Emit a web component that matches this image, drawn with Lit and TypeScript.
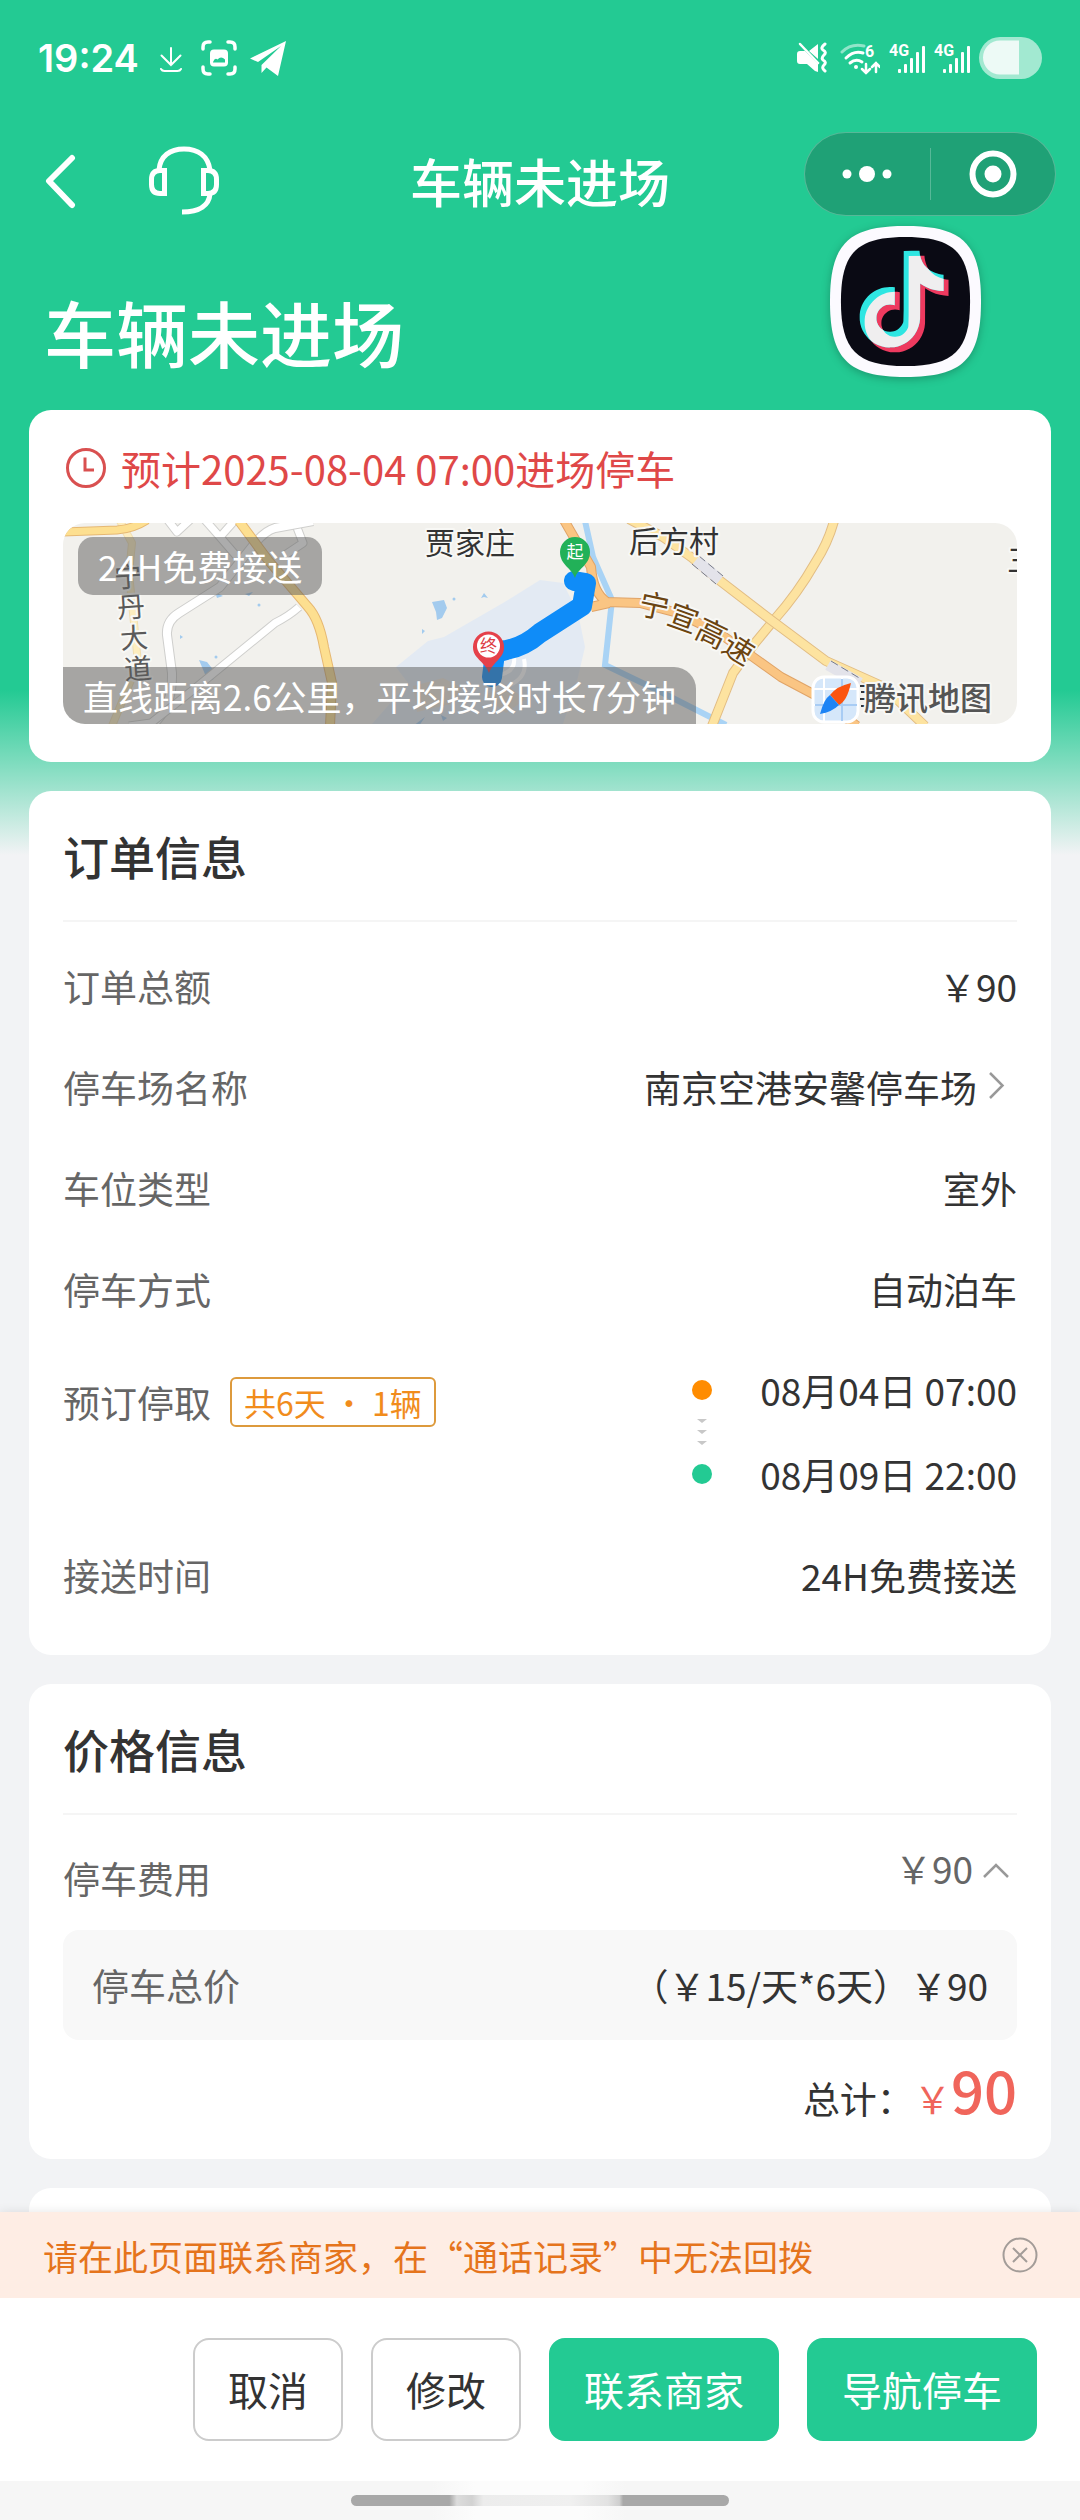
import { LitElement, html, css, svg } from "lit";
import { customElement, property } from "lit/decorators.js";

const NOTE =
  "M12.525.02c1.31-.02 2.61-.01 3.91-.02.08 1.53.63 3.09 1.75 4.17 1.12 1.11 2.7 1.62 4.24 1.79v4.03c-1.44-.05-2.89-.35-4.2-.97-.57-.26-1.1-.59-1.62-.93-.01 2.92.01 5.84-.02 8.75-.08 1.4-.54 2.79-1.35 3.94-1.31 1.92-3.58 3.17-5.91 3.21-1.43.08-2.86-.31-4.08-1.03-2.02-1.19-3.44-3.37-3.65-5.71-.02-.5-.03-1-.01-1.49.18-1.9 1.12-3.72 2.58-4.96 1.66-1.44 3.98-2.13 6.15-1.72.02 1.48-.04 2.96-.04 4.44-.99-.32-2.15-.23-3.02.37-.63.41-1.11 1.04-1.36 1.75-.21.51-.15 1.07-.14 1.61.24 1.64 1.82 3.02 3.5 2.87 1.12-.01 2.19-.66 2.77-1.61.19-.33.4-.67.41-1.06.1-1.79.06-3.57.07-5.36.01-4.03-.01-8.05.02-12.07z";

@customElement("status-bar")
export class StatusBar extends LitElement {
  static styles = css`
    :host {
      display: flex;
      justify-content: space-between;
      align-items: center;
      height: 116px;
      padding: 0 38px;
      color: #fff;
    }
    .group {
      display: flex;
      align-items: center;
      gap: 13px;
    }
    .system {
      gap: 9px;
    }
    .time {
      font: 600 38px/48px Inter, "Liberation Sans", sans-serif;
    }
    svg {
      display: block;
      flex: none;
    }
    .net {
      font: 700 16px Roboto, sans-serif;
    }
  `;

  private signal() {
    return html`<svg width="36" height="36" viewBox="0 0 36 36" fill="#fff" role="img" aria-label="4G">
      <text class="net" x="0" y="16">4G</text>
      <rect x="9" y="29" width="3" height="4" rx="1" />
      <rect x="15" y="24" width="3" height="9" rx="1" />
      <rect x="21" y="18" width="3" height="15" rx="1" />
      <rect x="27" y="12" width="3" height="21" rx="1" />
      <rect x="33" y="6" width="3" height="27" rx="1" />
    </svg>`;
  }

  render() {
    return html`
      <div class="group">
        <span class="time">19:24</span>
        <svg width="36" height="36" viewBox="0 0 36 36" fill="none" stroke="#fff" stroke-width="2" stroke-linecap="round">
          <path d="M19 8v17M9.500 15.500l9.500 9.500 9.500-9.500M9 29c1 2 2 2 3.500 2h13c1.500 0 2.500 0 3.500-2" />
        </svg>
        <svg width="36" height="36" viewBox="0 0 36 36" fill="none">
          <path d="M2 9V7q0-5 5-5h2M27 2h2q5 0 5 5v2M34 27v2q0 5-5 5h-2M9 34H7q-5 0-5-5v-2" stroke="#fff" stroke-width="3.500" stroke-linecap="round" />
          <rect x="9" y="9.500" width="18" height="17" rx="4" fill="#fff" />
          <path d="M12 22q2-5 4.500-2.500Q20 15.500 24 19.500v3H12z" fill="#23ca93" />
        </svg>
        <svg width="36" height="36" viewBox="0 0 36 36" fill="#fff">
          <path d="M36 1L0 18.500l8 3.500L31 6 11.500 25v8l5-5.500L28 36z" />
        </svg>
      </div>
      <div class="group system">
        <svg width="34" height="32" viewBox="0 0 34 32" fill="#fff">
          <path d="M0 12q0-3 3-3h5l13 13v8l-3-1-8-7H3q-3 0-3-3zM12 9l9-7v15z" />
          <path d="M3 2l18 19" stroke="#fff" stroke-width="2.500" stroke-linecap="round" />
          <path d="M28 2q-5 4-2 6 4 2 1 5t-1 5q4 2 1 5t1 6" fill="none" stroke="#fff" stroke-width="3" stroke-linecap="round" />
        </svg>
        <svg width="40" height="36" viewBox="0 0 40 36" fill="none" stroke="#fff" stroke-width="3" stroke-linecap="round">
          <path d="M2 12Q11 3 24 6" opacity=".5" />
          <path d="M6 18q8-8 17-5M10 23q6-5 12-1" />
          <circle cx="16" cy="27" r="2" fill="#fff" stroke="none" />
          <text class="net" x="25" y="17" fill="#fff" stroke="none">6</text>
          <path d="M26 24v9m-4-4l4 4 4-4M36 32v-9m-4 4l4-4 4 4" stroke-width="2.500" />
        </svg>
        ${this.signal()} ${this.signal()}
        <svg width="63" height="42" viewBox="0 0 63 42">
          <rect width="63" height="42" rx="21" fill="#a2e9d1" />
          <path d="M40 3.500v34H21a17 17 0 0 1 0-34z" fill="#edfaf6" />
        </svg>
      </div>
    `;
  }
}

@customElement("route-map")
export class RouteMap extends LitElement {
  static styles = css`
    :host {
      display: block;
      position: relative;
      height: 201px;
      border-radius: 22px;
      overflow: hidden;
      background: #f2f1ed;
    }
    svg {
      display: block;
      width: 100%;
      height: 100%;
    }
    .badge,
    .distance {
      position: absolute;
      background: rgba(90, 90, 90, 0.5);
      color: #fff;
      font-size: 35px;
    }
    .badge {
      left: 15px;
      top: 14px;
      padding: 0 20px;
      line-height: 58px;
      border-radius: 15px;
    }
    .distance {
      left: 0;
      bottom: 0;
      padding: 0 20px;
      line-height: 57px;
      border-radius: 0 22px 0 0;
    }
    text {
      paint-order: stroke;
      stroke: #f8f8f5;
      stroke-width: 4px;
      stroke-linejoin: round;
    }
    .place {
      font-size: 30px;
      fill: #333;
    }
    .road {
      font-size: 30px;
      fill: #6b4410;
      text-anchor: middle;
    }
    .street {
      font-size: 28px;
      fill: #5a5a5a;
    }
    .pin {
      font-size: 17px;
      text-anchor: middle;
      stroke: none;
      fill: #fff;
    }
    .end {
      fill: #dd3d45;
    }
    .brand {
      font-size: 32px;
      font-weight: 500;
      fill: #555;
    }
  `;

  private line(d: string, edge: string, fill: string, w: number) {
    return svg`<path d=${d} fill="none" stroke=${edge} stroke-width=${w + 2} stroke-linejoin="round" />
      <path d=${d} fill="none" stroke=${fill} stroke-width=${w} stroke-linejoin="round" />`;
  }

  private glyphs(word: string, spots: number[][], cls: string) {
    return spots.map(
      ([x, y, r], i) => svg`<text class=${cls} transform="translate(${x} ${y}) rotate(${r})" y="10">${word[i]}</text>`
    );
  }

  render() {
    return html`
      <svg viewBox="0 0 954 201" preserveAspectRatio="xMidYMid slice" role="img" aria-label="路线地图">
        <path d="M477 57L440 80 381 114 365 118 333 144 345 160 309 201H500L515 154 522 124 515 90 500 60z" fill="#e3eaf3" />
        <path d="M350 163l30-8 20 10-12 16-34 8zM420 172l25-8 18 12-20 14z" fill="#eee6db" />
        <g fill="#a3cbee">
          <path d="M369 79l12-2 3 8-5 10-5 2-1-8zM136 137l8 2 8 10-2 8-6-1zM152 69l8 4-6 2zM129 82l7-5-2 5zM182 71l8-2-4 4zM418 75l3-5 4 5-4-1zM117 112l3 2-3 2zM359 106l3 2-3 3zM350 203l12-9-6 9zM378 192l6 3-4 3z" />
          <circle cx="196" cy="82" r="1.500" /><circle cx="391" cy="76" r="1.500" /><circle cx="153" cy="134" r="1.500" />
        </g>
        ${this.line("M104 -4L114 9 128 -4M142 -3L157 14 173 -4M157 14L176 36M233 2L240 20 222 32", "#cfcfcd", "#fff", 7)}
        ${this.line("M250 -2L212 5Q202 8 192 20L157 64 116 90Q103 98 104 112L109 150Q110 185 88 203", "#cfcfcd", "#fff", 8)}
        ${this.line("M236 84Q226 93 212 100L130 167 88 200 66 203", "#cfcfcd", "#fff", 7)}
        ${this.line("M57 -2L69 20 66 50 71 100 75 140 49 203", "#f0dfb4", "#fdedbf", 6)}
        ${this.line("M-2 9L54 7Q70 6 84 -3", "#e6b873", "#fddf90", 7)}
        ${this.line("M176 -2L205 37 245 84Q256 96 261 124L269 160 267 203", "#e6b873", "#fddf90", 8)}
        <path d="M437 152q16-4 14-18m-4 28q18-8 14-26" fill="none" stroke="#fff" stroke-width="4" />
        <path d="M522 -2L530 34 549 77 542 142 594 167 663 202" fill="none" stroke="#a9d3f5" stroke-width="6" />
        ${this.line("M771 -2Q765 20 752 40 735 70 711 97L692 120 670 150 649 203", "#e2bd84", "#fde3a0", 8)}
        ${this.line("M566 -4L600 14 628 34 656 57 708 97 763 138 821 164 862 203", "#e2bd84", "#fde3a0", 8)}
        <path d="M633 37L657 57M765 142L797 160" stroke="#e3e3ea" stroke-width="11" />
        <path d="M636 33l24 20M629 41l24 20M768 138l30 18" stroke="#777b88" stroke-width="1" stroke-dasharray="8 4" fill="none" />
        ${this.line("M501 -3L528 44Q530 70 544 79L577 80 615 90 656 110 690 134 718 154 752 172 794 203M528 84L546 80", "#e0a468", "#fac583", 8)}
        <path d="M429 154L432 130 443 127Q461 124 477 110L519 83 523 60 511 58" fill="none" stroke="#0f8cf8" stroke-width="20" stroke-linecap="round" stroke-linejoin="round" />
        <path d="M512 55C509 45 497 42 497 29a15 15 0 0 1 30 0C527 42 515 45 512 55z" fill="#22b158" />
        <text class="pin" x="512" y="35">起</text>
        <path d="M426 150C421 137 410 136 410 124a15.500 15.500 0 0 1 31 0C441 136 431 137 426 150z" fill="#e5414a" />
        <circle cx="425.500" cy="123" r="11.500" fill="#fff" />
        <text class="pin end" x="425.500" y="129">终</text>
        <text class="place" x="362" y="31">贾家庄</text>
        <text class="place" x="566" y="29">后方村</text>
        <text class="place" x="944" y="48">三</text>
        ${this.glyphs("宁丹大道", [[65, 54, -4], [68, 84, -4], [71, 115, -4], [75, 146, -4]], "road street")}
        ${this.glyphs("宁宣高速", [[591, 84, 12], [620, 96, 20], [648, 111, 26], [675, 127, 32]], "road")}
        <rect x="750" y="154" width="45" height="45" rx="11" fill="#d5e7fa" stroke="#fff" stroke-width="3" />
        <path d="M761 155v43M779 155v43M751 166h43M751 182h43" stroke="#fff" stroke-width="2" />
        <path d="M779 156v42M752 182h42" stroke="#a8ccf4" stroke-width="2" />
        <path d="M788 160Q784 178 776 182L767 172Q774 163 788 160z" fill="#fb5410" />
        <path d="M757 191Q761 176 767 172L776 182Q769 189 757 191z" fill="#1d84f5" />
        <path d="M797 163h6M798 169h5M797 176h6M798 183h5" stroke="#333" stroke-width="2" />
        <text class="brand" x="801" y="187">腾讯地图</text>
      </svg>
      <span class="badge">24H免费接送</span>
      <span class="distance">直线距离2.6公里，平均接驳时长7分钟</span>
    `;
  }
}

@customElement("info-card")
export class InfoCard extends LitElement {
  static styles = css`
    :host {
      display: block;
      flex: none;
      padding: 0 34px;
      border-radius: 22px;
      background: #fff;
    }
    h2 {
      margin: 0;
      border-bottom: 2px solid #f5f5f5;
      font-size: 46px;
      font-weight: 500;
      line-height: 129px;
      color: #333;
    }
  `;
  @property() heading = "";

  render() {
    return html`${this.heading ? html`<h2>${this.heading}</h2>` : ""}<slot></slot>`;
  }
}

@customElement("app-root")
export class AppRoot extends LitElement {
  static styles = css`
    :host {
      display: flex;
      flex-direction: column;
      height: 100vh;
      position: relative;
      overflow: hidden;
      background: linear-gradient(#23ca93 0, #23ca93 690px, #f2f3f5 855px);
      color: #333;
      font-family: "Noto Sans CJK SC", sans-serif;
      font-size: 37px;
      line-height: 57px;
    }
    svg {
      display: block;
      flex: none;
    }
    button {
      margin: 0;
      padding: 0;
      border: 0;
      background: none;
      font: inherit;
      color: inherit;
    }
    a {
      color: inherit;
      text-decoration: none;
    }
    .nav {
      display: grid;
      grid-template-columns: 1fr auto 1fr;
      align-items: center;
      height: 97px;
      margin-top: 16px;
      padding: 0 24px;
      color: #fff;
    }
    .tools {
      display: flex;
      align-items: center;
      gap: 72px;
      padding-left: 20px;
    }
    .title {
      font-size: 52px;
      font-weight: 500;
    }
    .capsule {
      display: flex;
      align-self: start;
      justify-self: end;
      align-items: center;
      box-sizing: border-box;
      width: 252px;
      height: 84px;
      border: 1px solid rgba(255, 255, 255, 0.25);
      border-radius: 42px;
      background: #1fa176;
    }
    .capsule button {
      display: flex;
      flex: 1;
      justify-content: center;
    }
    .capsule button + button {
      border-left: 1px solid rgba(255, 255, 255, 0.25);
      padding: 2px 0;
    }
    .floating {
      position: absolute;
      top: 226px;
      right: 99px;
      filter: drop-shadow(0 2px 4px rgba(0, 0, 0, 0.25));
    }
    h1 {
      margin: 52px 0 0;
      padding: 0 44px;
      font-size: 72px;
      font-weight: 500;
      line-height: 100px;
      color: #fff;
    }
    main {
      display: flex;
      flex: 1;
      flex-direction: column;
      gap: 29px;
      min-height: 0;
      margin-top: 29px;
      padding: 0 29px;
      overflow-y: auto;
      scrollbar-width: none;
    }
    .arrival {
      display: flex;
      align-items: center;
      gap: 14px;
      padding: 30px 0 27px;
      font-size: 40px;
      line-height: 56px;
      color: #df4848;
    }
    route-map {
      margin-bottom: 38px;
    }
    dl {
      margin: 0;
      padding: 14px 0 29px;
    }
    .row {
      display: flex;
      justify-content: space-between;
      padding: 22px 0;
    }
    dt {
      color: #666;
    }
    dd {
      margin: 0;
    }
    .lot {
      display: flex;
      gap: 12px;
    }
    .booking {
      display: flex;
      align-items: center;
      gap: 19px;
      height: 80px;
    }
    .tag {
      box-sizing: border-box;
      height: 50px;
      padding: 0 12px;
      border: 2px solid #dd9a3c;
      border-radius: 6px;
      font-size: 32px;
      line-height: 46px;
      color: #f18c1c;
    }
    .times {
      display: flex;
      gap: 48px;
    }
    .times ol {
      display: flex;
      flex-direction: column;
      gap: 27px;
      margin: 0;
      padding: 0;
      list-style: none;
    }
    .fee {
      display: flex;
      justify-content: space-between;
      align-items: flex-end;
      height: 67px;
      padding: 25px 0 23px;
      color: #666;
    }
    .toggle {
      display: flex;
      align-self: flex-start;
      gap: 10px;
      padding-right: 8px;
    }
    .toggle svg {
      margin-top: 23px;
    }
    .detail {
      display: flex;
      justify-content: space-between;
      align-items: center;
      height: 110px;
      padding: 0 29px;
      border-radius: 16px;
      background: #f8f8f8;
    }
    .muted {
      color: #666;
    }
    .total {
      display: flex;
      justify-content: flex-end;
      align-items: baseline;
      padding: 7px 0 28px;
    }
    .currency,
    .sum {
      color: #f0655b;
    }
    .sum {
      font-size: 58px;
      font-weight: 500;
      line-height: 84px;
    }
    .next {
      height: 120px;
    }
    footer {
      position: relative;
      background: #fff;
      box-shadow: 0 0 10px rgba(0, 0, 0, 0.1);
    }
    .notice {
      display: flex;
      justify-content: space-between;
      align-items: center;
      height: 86px;
      padding: 0 42px 0 43px;
      background: #feede4;
      font-size: 35px;
      color: #e5741c;
    }
    .actions {
      display: flex;
      justify-content: flex-end;
      gap: 28px;
      padding: 40px 43px;
    }
    .actions button {
      height: 103px;
      padding: 0 33px;
      border: 2px solid #ccc;
      border-radius: 16px;
      font-size: 40px;
      color: #333;
    }
    .actions .primary {
      border-color: #23ca93;
      background: #23ca93;
      color: #fff;
    }
    .home {
      display: flex;
      justify-content: center;
      height: 25px;
      padding-top: 14px;
      background: linear-gradient(90deg, #f6f6f6 40%, #fcfcfc 44%, #fcfcfc 54%, #f6f6f6 58%);
    }
    .handle {
      width: 35%;
      height: 11px;
      border-radius: 6px;
      background: linear-gradient(90deg, #a8a8a8 26%, #dcdcdc 28%, #d2d2d2 32%, #ececec 35%, #f0f0f0 58%, #e2e2e2 68%, #cfcfcf 71%, #a8a8a8 72%);
    }
  `;

  render() {
    return html`
      <status-bar></status-bar>
      <nav class="nav">
        <div class="tools">
          <button aria-label="返回">
            <svg width="32" height="58" viewBox="0 0 32 58" fill="none" stroke="#fff" stroke-width="6" stroke-linecap="round" stroke-linejoin="round">
              <path d="M28 6L5 29l23 24" />
            </svg>
          </button>
          <button aria-label="客服">
            <svg width="72" height="72" viewBox="0 0 72 72" fill="none" stroke="#fff" stroke-width="5">
              <path d="M11 25C12 11 22 4 36 4S60 11 62 25M62 49C61 60 52 67 34 67" />
              <path d="M16.500 25.500v23H12q-8.500 0-8.500-9v-5q0-9 8.500-9zM55.500 25.500v23H60q8.500 0 8.500-9v-5q0-9-8.500-9z" />
            </svg>
          </button>
        </div>
        <span class="title">车辆未进场</span>
        <div class="capsule">
          <button aria-label="更多">
            <svg width="50" height="50" viewBox="0 0 50 50" fill="#fff">
              <circle cx="5" cy="25" r="4.500" /><circle cx="25" cy="25" r="8" /><circle cx="45" cy="25" r="4.500" />
            </svg>
          </button>
          <button aria-label="关闭">
            <svg width="48" height="48" viewBox="0 0 48 48" fill="none">
              <circle cx="24" cy="24" r="20.500" stroke="#fff" stroke-width="6" /><circle cx="24" cy="24" r="8.500" fill="#fff" />
            </svg>
          </button>
        </div>
      </nav>
      <h1>车辆未进场</h1>
      <svg class="floating" width="151" height="151" viewBox="0 0 152 152" role="img" aria-label="抖音">
        <clipPath id="shifted"><path d=${NOTE} transform="translate(28.500 30) scale(4.050)" /></clipPath>
        <path d="M0 76C0 18 18 0 76 0S152 18 152 76 134 152 76 152 0 134 0 76z" fill="#fcfaff" />
        <path d="M11 76C11 27 27 11 76 11S141 27 141 76 125 141 76 141 11 125 11 76z" fill="#0a0a14" />
        <path d=${NOTE} transform="translate(28.500 30) scale(4.050)" fill="#ee3a5f" />
        <path d=${NOTE} transform="translate(23.500 25) scale(4.050)" fill="#2ee6e2" />
        <g clip-path="url(#shifted)"><path d=${NOTE} transform="translate(23.500 25) scale(4.050)" fill="#efeeef" /></g>
      </svg>
      <main>
        <info-card>
          <div class="arrival">
            <svg width="44" height="44" viewBox="0 0 44 44" fill="none" stroke="#d95050" stroke-width="3">
              <circle cx="23" cy="22" r="18.500" /><path d="M22 11.500V24h9" />
            </svg>
            <span>预计2025-08-04 07:00进场停车</span>
          </div>
          <route-map></route-map>
        </info-card>
        <info-card heading="订单信息">
          <dl>
            <div class="row"><dt>订单总额</dt><dd>￥90</dd></div>
            <div class="row">
              <dt>停车场名称</dt>
              <dd>
                <a class="lot" href="#lot">南京空港安馨停车场
                  <svg width="28" height="50" viewBox="0 0 28 50" fill="none" stroke="#999" stroke-width="2.500"><path d="M1 14l12.500 12.500L1 39" /></svg>
                </a>
              </dd>
            </div>
            <div class="row"><dt>车位类型</dt><dd>室外</dd></div>
            <div class="row"><dt>停车方式</dt><dd>自动泊车</dd></div>
            <div class="row">
              <dt class="booking">预订停取<span class="tag">共6天 ・ 1辆</span></dt>
              <dd class="times">
                <svg width="20" height="141" viewBox="0 0 20 141">
                  <circle cx="10" cy="28" r="10" fill="#ff8c00" />
                  <path d="M5 57h10l-5 4zM5 68h10l-5 4zM5 79h10l-5 4z" fill="#c8c8c8" />
                  <circle cx="10" cy="112" r="10" fill="#23ca93" />
                </svg>
                <ol><li>08月04日 07:00</li><li>08月09日 22:00</li></ol>
              </dd>
            </div>
            <div class="row"><dt>接送时间</dt><dd>24H免费接送</dd></div>
          </dl>
        </info-card>
        <info-card heading="价格信息">
          <div class="fee">
            <span>停车费用</span>
            <button class="toggle" aria-expanded="true">￥90
              <svg width="26" height="16" viewBox="0 0 26 16" fill="none" stroke="#999" stroke-width="2.500"><path d="M1 14L13 2l12 12" /></svg>
            </button>
          </div>
          <div class="detail"><span class="muted">停车总价</span><span>（￥15/天*6天）￥90</span></div>
          <div class="total"><span>总计：</span><span class="currency">￥</span><span class="sum">90</span></div>
        </info-card>
        <info-card class="next"></info-card>
      </main>
      <footer>
        <div class="notice">
          <span>请在此页面联系商家，在“通话记录”中无法回拨</span>
          <button aria-label="关闭提示">
            <svg width="36" height="36" viewBox="0 0 36 36" fill="none" stroke="#a39c98" stroke-width="2">
              <circle cx="18" cy="18" r="16.500" /><path d="M11 11l14 14M25 11L11 25" />
            </svg>
          </button>
        </div>
        <div class="actions">
          <button>取消</button>
          <button>修改</button>
          <button class="primary">联系商家</button>
          <button class="primary">导航停车</button>
        </div>
        <div class="home"><div class="handle"></div></div>
      </footer>
    `;
  }
}
